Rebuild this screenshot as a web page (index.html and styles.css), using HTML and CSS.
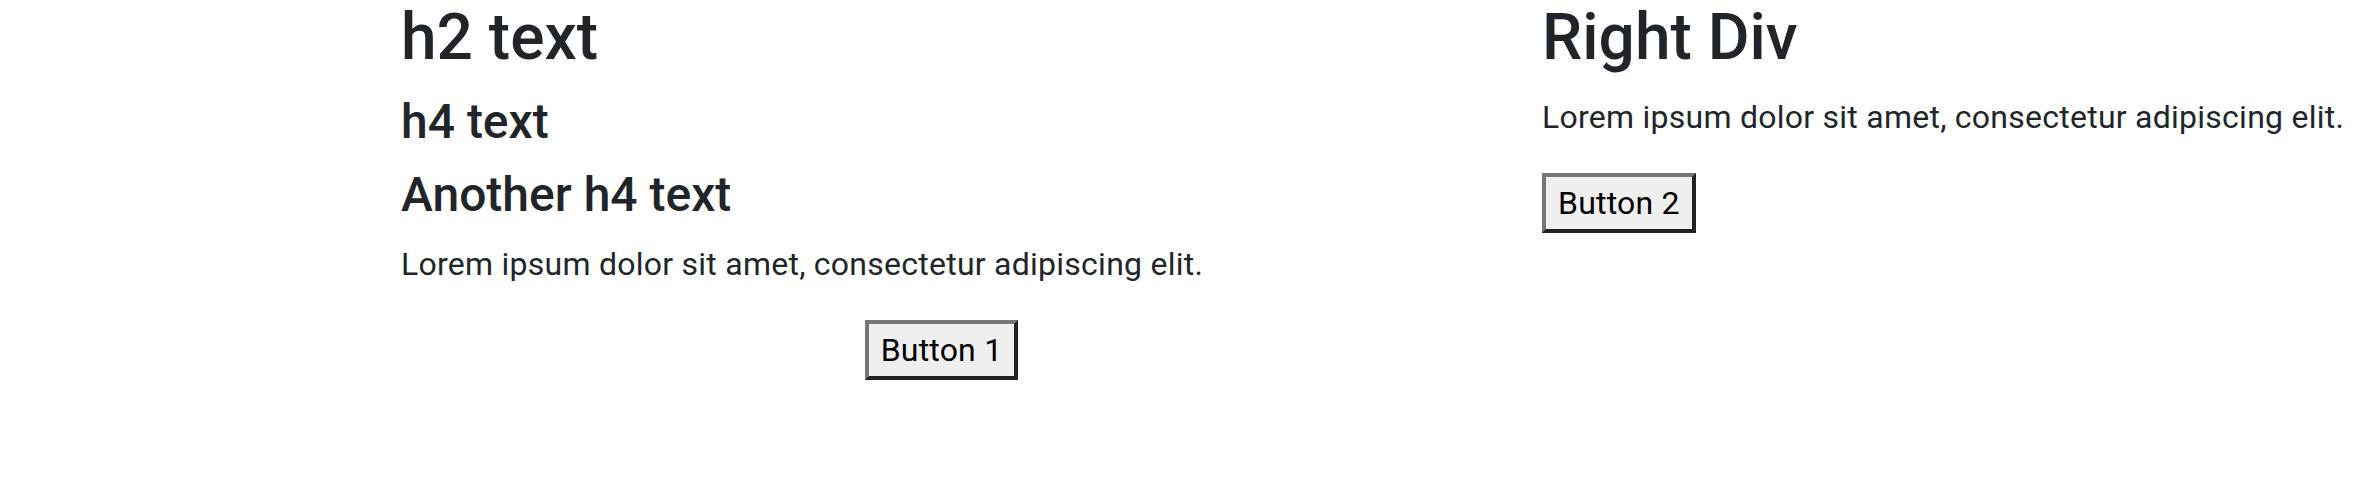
FILE: index.html
```html
<!DOCTYPE html>
<html lang="en">
<head>
    <meta charset="UTF-8">
    <title>Two columns</title>
    <link rel="stylesheet" href="styles.css">
</head>
<body>
    <div class="page">
        <div class="left">
            <h2>h2 text</h2>
            <h4>h4 text</h4>
            <h4>Another h4 text</h4>
            <p>Lorem ipsum dolor sit amet, consectetur adipiscing elit.</p>
            <div class="actions">
                <button>Button 1</button>
            </div>
        </div>
        <div class="right">
            <h2>Right Div</h2>
            <p>Lorem ipsum dolor sit amet, consectetur adipiscing elit.</p>
            <button>Button 2</button>
        </div>
    </div>
</body>
</html>
```

FILE: styles.css
```css
*{
    box-sizing: border-box;
}
body{
    margin: 0;
    font-family: Roboto, "Liberation Sans", Arial, sans-serif;
    font-size: 32px;
    line-height: 1.5;
    color: #212529;
}
h2,h4{
    margin: 0 0 16px;
    font-weight: 500;
    line-height: 1.2;
}
h2{
    font-size: 64px;
}
h4{
    font-size: 48px;
}
p{
    margin: 0 0 32px;
    letter-spacing: 0.25px;
}
.page{
    display: flex;
    padding-left: 401px;
    gap: 60px;
}
.left{
    width: 1081px;
}
.actions{
    text-align: center;
}
button{
    font-family: Roboto, "Liberation Sans", Arial, sans-serif;
    font-size: 32px;
    line-height: 48px;
    letter-spacing: 0.2px;
    color: #000;
    background: #efefef;
    padding: 2px 12px;
    border: 4px solid;
    border-color: #767676 #222222 #222222 #767676;
    margin: 0;
}
```
